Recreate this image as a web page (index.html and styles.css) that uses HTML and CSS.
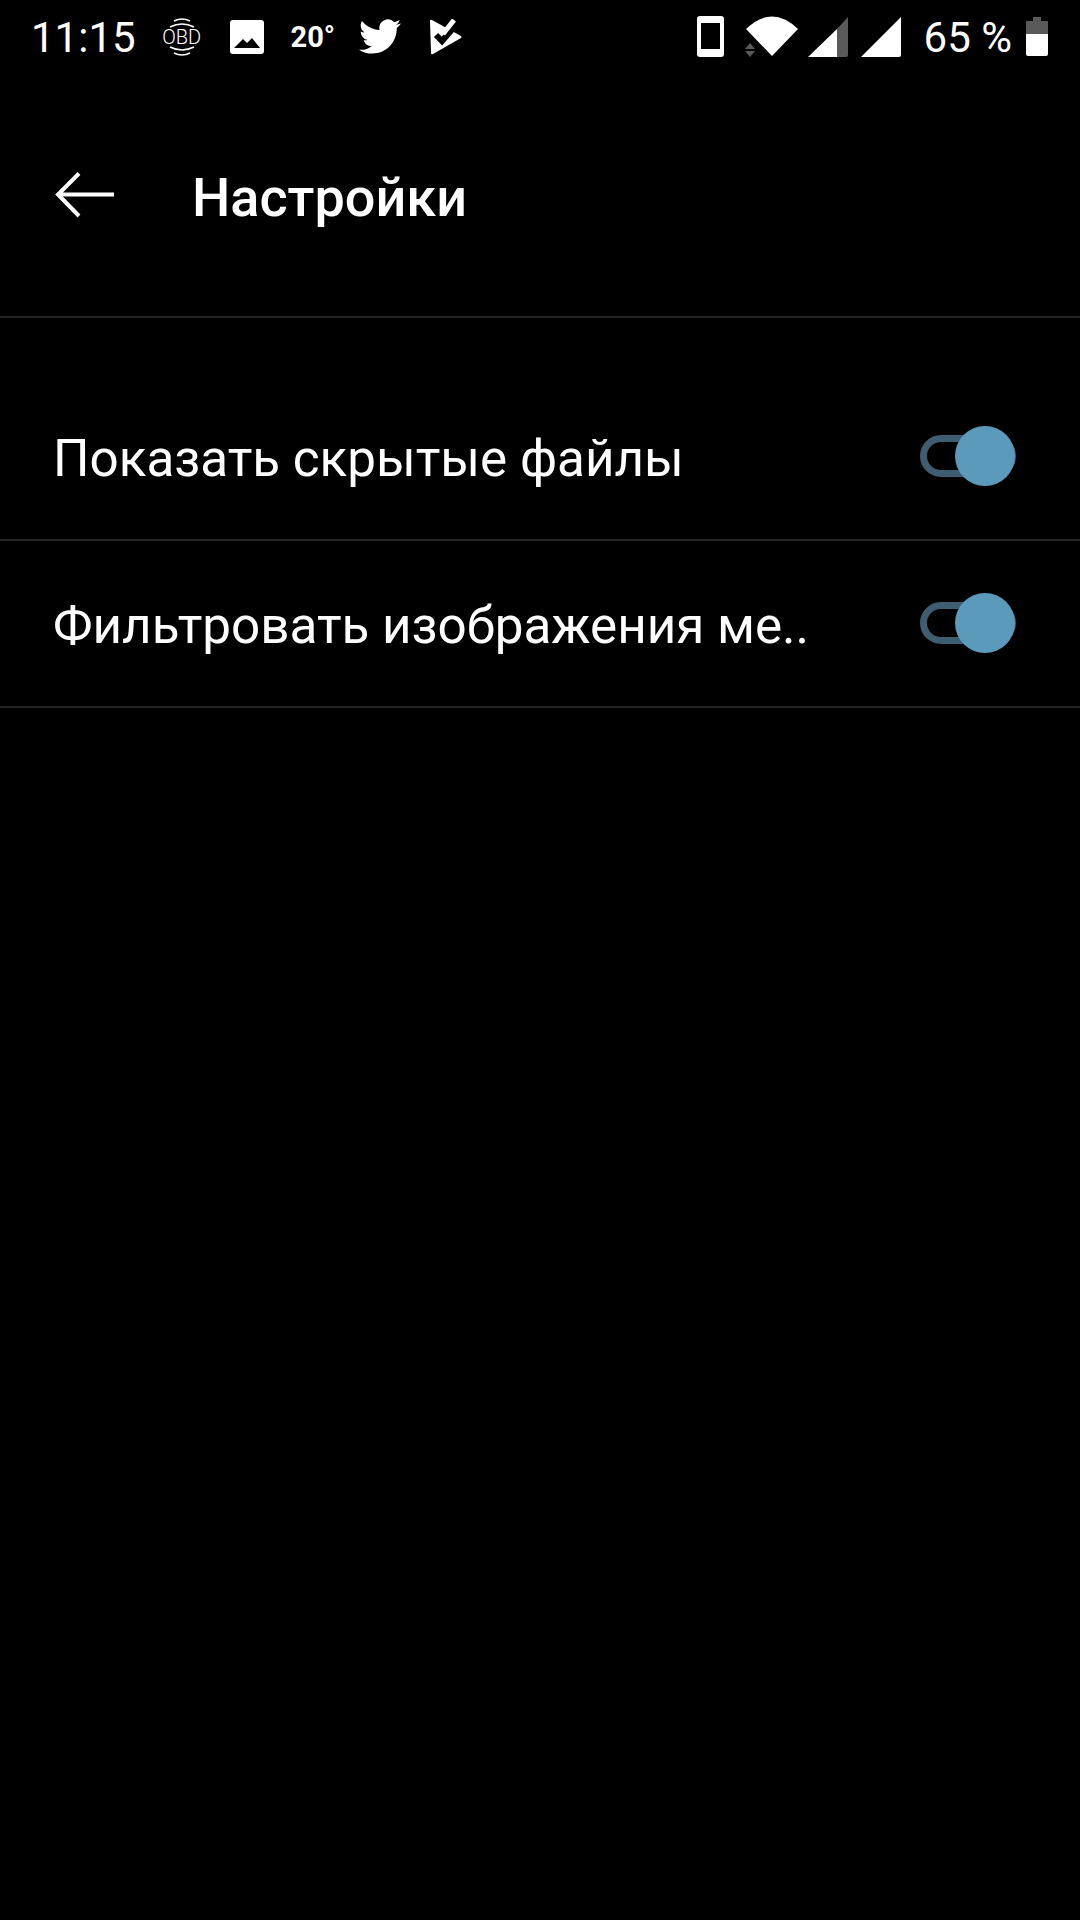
FILE: index.html
```html
<!DOCTYPE html>
<html lang = 'ru'>
<head>
    <meta charset = 'UTF-8'>
    <title>Настройки</title>
    <link rel="stylesheet" href="styles.css">
</head>

<body>
    <div class = 'status-bar'>
        <div class = 'status-left'>
            <span class = 'clock'>11:15</span>
            <div class = 'obd'>
                <svg class = 'obd-arcs' width = '38' height = '38' viewBox = '0 0 38 38'>
                    <path d = 'M11 3 Q19 -1 27 3 M7 9 Q19 3 31 9 M7 29 Q19 35 31 29 M11 35 Q19 39 27 35' fill = 'none' stroke = '#fff' stroke-width = '1.6'/>
                </svg>
                <span class = 'obd-text'>OBD</span>
            </div>
            <svg class = 'icon-picture' width = '34' height = '34' viewBox = '0 0 34 34'>
                <rect width = '34' height = '34' rx = '3' fill = '#fff'/>
                <path d = 'M4 28 L13 19 L17 23 L22 18 L30 28 Z' fill = '#000'/>
            </svg>
            <span class = 'temp'>20°</span>
            <svg class = 'icon-twitter' width = '42' height = '35' viewBox = '0 0 24 20'>
                <path d = 'M23.95 2.57a10 10 0 0 1-2.82.78 4.96 4.96 0 0 0 2.16-2.73c-.95.56-2 .96-3.13 1.19a4.92 4.92 0 0 0-8.38 4.48C7.69 6.1 4.07 4.13 1.64 1.16a4.82 4.82 0 0 0-.67 2.48c0 1.71.87 3.21 2.19 4.1a4.9 4.9 0 0 1-2.23-.62v.06a4.92 4.92 0 0 0 3.95 4.83 5 5 0 0 1-2.21.08 4.94 4.94 0 0 0 4.6 3.42 9.87 9.87 0 0 1-6.1 2.1c-.39 0-.78-.02-1.17-.06a14 14 0 0 0 7.56 2.21c9.05 0 14-7.5 14-13.99 0-.21 0-.42-.02-.63A9.94 9.94 0 0 0 24 2.59z' fill = '#fff'/>
            </svg>
            <svg class = 'icon-task' width = '33' height = '36' viewBox = '0 0 33 36'>
                <path d = 'M1 2 Q1 0 3 1 L32 17 Q33 18 32 19 L4 35 Q2 36 2 34 Z' fill = '#fff'/>
                <path d = 'M7 16 L13 22 L26 7' fill = 'none' stroke = '#000' stroke-width = '6'/>
                <path d = 'M14 15 L25 1' fill = 'none' stroke = '#fff' stroke-width = '5'/>
            </svg>
        </div>
        <div class = 'status-right'>
            <svg class = 'icon-phone' width = '27' height = '41' viewBox = '0 0 27 41'>
                <rect width = '27' height = '41' rx = '3' fill = '#fff'/>
                <rect x = '4' y = '7' width = '19' height = '26' fill = '#000'/>
            </svg>
            <svg class = 'icon-wifi' width = '55' height = '41' viewBox = '0 0 55 41'>
                <path d = 'M2 13 Q28 -12 54 13 L28 40 Z' fill = '#fff'/>
                <path d = 'M1 33 L6 27 L11 33 Z M1 35 L11 35 L6 41 Z' fill = '#5a5a5a'/>
            </svg>
            <svg class = 'icon-signal' width = '40' height = '40' viewBox = '0 0 40 40'>
                <path d = 'M0 40 L29 12 L29 40 Z' fill = '#fff'/>
                <path d = 'M29 12 L40 0 L40 38 Q40 40 38 40 L29 40 Z' fill = '#5a5a5a'/>
            </svg>
            <svg class = 'icon-signal' width = '40' height = '40' viewBox = '0 0 40 40'>
                <path d = 'M0 40 L40 0 L40 38 Q40 40 38 40 Z' fill = '#fff'/>
            </svg>
            <span class = 'battery-text'>65 %</span>
            <svg class = 'icon-battery' width = '22' height = '39' viewBox = '0 0 22 39'>
                <path d = 'M7 0 H15 V4 H21 Q22 4 22 5 V17 H0 V5 Q0 4 1 4 H7 Z' fill = '#5a5a5a'/>
                <path d = 'M0 17 H22 V37 Q22 39 20 39 H2 Q0 39 0 37 Z' fill = '#fff'/>
            </svg>
        </div>
    </div>

    <div class = 'app-bar'>
        <svg class = 'back-arrow' width = '60' height = '46' viewBox = '0 0 60 46'>
            <path d = 'M59 22.5 H3 M24 1.5 L3 22.5 L24 44' fill = 'none' stroke = '#fff' stroke-width = '4'/>
        </svg>
        <h1 class = 'app-title'>Настройки</h1>
    </div>

    <div class = 'settings-list'>
        <div class = 'setting-row'>
            <span class = 'setting-label'>Показать скрытые файлы</span>
            <div class = 'toggle'><div class = 'toggle-knob'></div></div>
        </div>
        <div class = 'setting-row'>
            <span class = 'setting-label'>Фильтровать изображения ме..</span>
            <div class = 'toggle'><div class = 'toggle-knob'></div></div>
        </div>
    </div>
</body>
</html>
```

FILE: styles.css
```css
body {
    margin : 0;
    width : 1080px;
    height : 1920px;
    background-color : #000;
    color : #fff;
    font-family : Roboto, "Noto Sans", sans-serif;
    overflow : hidden;
}

.status-bar {
    height : 70px;
    display : flex;
    justify-content : space-between;
    align-items : center;
    padding : 3px 32px 0 31px;
    box-sizing : border-box;
}

.status-left, .status-right {
    display : flex;
    align-items : center;
}

.clock, .battery-text {
    font-size : 42px;
    line-height : 66px;
    padding-top : 2px;
}

.obd {
    position : relative;
    width : 38px;
    height : 38px;
    margin-left : 27px;
    display : flex;
    align-items : center;
    justify-content : center;
}

.obd-arcs {
    position : absolute;
    left : 0;
    top : 0;
}

.obd-text {
    font-size : 20px;
    font-weight : 300;
    position : relative;
}

.icon-picture {
    margin-left : 29px;
}

.temp {
    margin-left : 27px;
    font-size : 29px;
    font-weight : 700;
}

.icon-twitter {
    margin-left : 24px;
}

.icon-task {
    margin-left : 28px;
}

.icon-wifi {
    margin-left : 20px;
}

.icon-signal {
    margin-left : 9px;
}

.icon-signal + .icon-signal {
    margin-left : 13px;
}

.battery-text {
    margin-left : 23px;
}

.icon-battery {
    margin-left : 14px;
}

.app-bar {
    height : 248px;
    display : flex;
    align-items : center;
    padding-left : 55px;
    border-bottom : 2px solid #242424;
    box-sizing : border-box;
}

.back-arrow {
    margin-top : 4px;
}

.app-title {
    margin : 8px 0 0 77px;
    font-size : 54px;
    font-weight : 500;
}

.settings-list {
    padding-top : 56px;
}

.setting-row {
    height : 167px;
    display : flex;
    justify-content : space-between;
    align-items : center;
    padding : 0 64px 0 53px;
    border-bottom : 2px solid #242424;
    box-sizing : border-box;
}

.setting-label {
    font-size : 51.2px;
    padding-top : 3px;
}

.toggle {
    position : relative;
    width : 96px;
    height : 42px;
    box-sizing : border-box;
    border : 7px solid #3f5d70;
    border-radius : 21px;
    margin-top : -2px;
}

.toggle-knob {
    position : absolute;
    right : -6px;
    top : -16px;
    width : 60px;
    height : 60px;
    border-radius : 50%;
    background-color : #5b9abb;
}
```
